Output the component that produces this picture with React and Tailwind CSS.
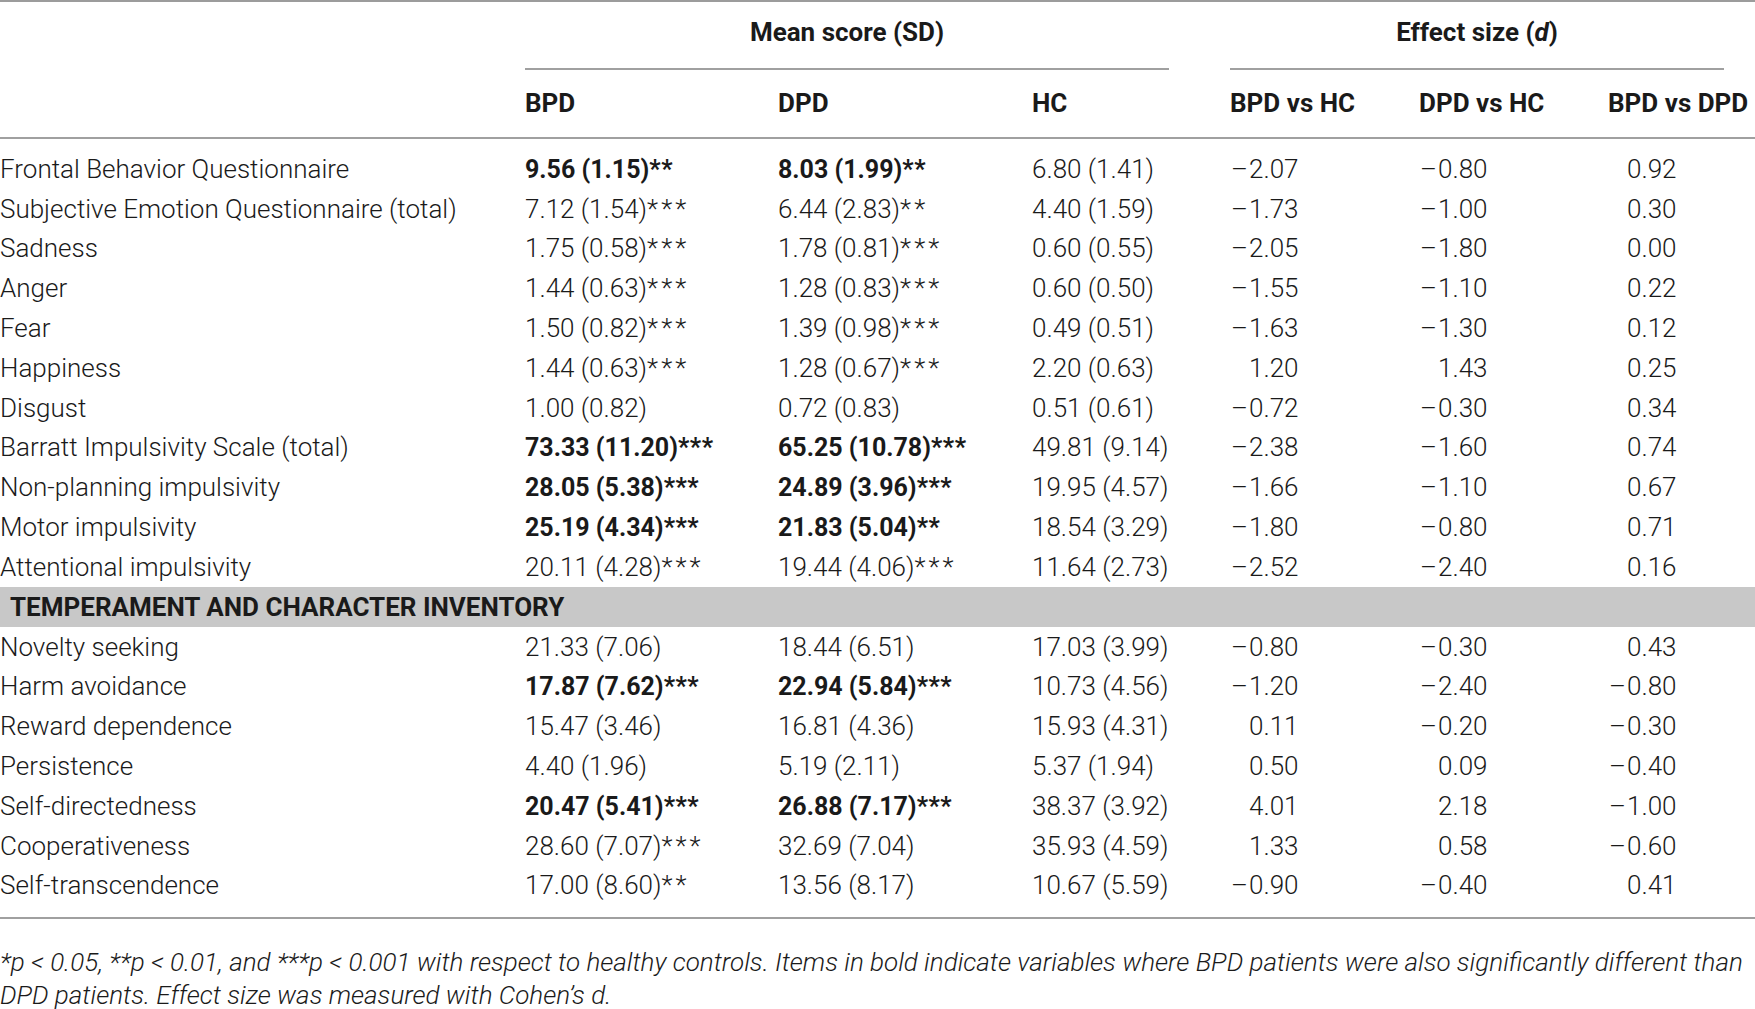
import React from "react";

const rows1 = [
  ["Frontal Behavior Questionnaire", ["9.56 (1.15)", "**", true], ["8.03 (1.99)", "**", true], "6.80 (1.41)", ["-2.07", "-0.80", "0.92"]],
  ["Subjective Emotion Questionnaire (total)", ["7.12 (1.54)", "***", false], ["6.44 (2.83)", "**", false], "4.40 (1.59)", ["-1.73", "-1.00", "0.30"]],
  ["Sadness", ["1.75 (0.58)", "***", false], ["1.78 (0.81)", "***", false], "0.60 (0.55)", ["-2.05", "-1.80", "0.00"]],
  ["Anger", ["1.44 (0.63)", "***", false], ["1.28 (0.83)", "***", false], "0.60 (0.50)", ["-1.55", "-1.10", "0.22"]],
  ["Fear", ["1.50 (0.82)", "***", false], ["1.39 (0.98)", "***", false], "0.49 (0.51)", ["-1.63", "-1.30", "0.12"]],
  ["Happiness", ["1.44 (0.63)", "***", false], ["1.28 (0.67)", "***", false], "2.20 (0.63)", ["1.20", "1.43", "0.25"]],
  ["Disgust", ["1.00 (0.82)", "", false], ["0.72 (0.83)", "", false], "0.51 (0.61)", ["-0.72", "-0.30", "0.34"]],
  ["Barratt Impulsivity Scale (total)", ["73.33 (11.20)", "***", true], ["65.25 (10.78)", "***", true], "49.81 (9.14)", ["-2.38", "-1.60", "0.74"]],
  ["Non-planning impulsivity", ["28.05 (5.38)", "***", true], ["24.89 (3.96)", "***", true], "19.95 (4.57)", ["-1.66", "-1.10", "0.67"]],
  ["Motor impulsivity", ["25.19 (4.34)", "***", true], ["21.83 (5.04)", "**", true], "18.54 (3.29)", ["-1.80", "-0.80", "0.71"]],
  ["Attentional impulsivity", ["20.11 (4.28)", "***", false], ["19.44 (4.06)", "***", false], "11.64 (2.73)", ["-2.52", "-2.40", "0.16"]],
];

const rows2 = [
  ["Novelty seeking", ["21.33 (7.06)", "", false], ["18.44 (6.51)", "", false], "17.03 (3.99)", ["-0.80", "-0.30", "0.43"]],
  ["Harm avoidance", ["17.87 (7.62)", "***", true], ["22.94 (5.84)", "***", true], "10.73 (4.56)", ["-1.20", "-2.40", "-0.80"]],
  ["Reward dependence", ["15.47 (3.46)", "", false], ["16.81 (4.36)", "", false], "15.93 (4.31)", ["0.11", "-0.20", "-0.30"]],
  ["Persistence", ["4.40 (1.96)", "", false], ["5.19 (2.11)", "", false], "5.37 (1.94)", ["0.50", "0.09", "-0.40"]],
  ["Self-directedness", ["20.47 (5.41)", "***", true], ["26.88 (7.17)", "***", true], "38.37 (3.92)", ["4.01", "2.18", "-1.00"]],
  ["Cooperativeness", ["28.60 (7.07)", "***", false], ["32.69 (7.04)", "", false], "35.93 (4.59)", ["1.33", "0.58", "-0.60"]],
  ["Self-transcendence", ["17.00 (8.60)", "**", false], ["13.56 (8.17)", "", false], "10.67 (5.59)", ["-0.90", "-0.40", "0.41"]],
];

const GRID = "grid grid-cols-[525px_253px_254px_198px_189px_189px_1fr]";

function Score({ v }) {
  const [num, stars, bold] = v;
  return (
    <span className={bold ? "font-bold text-[25px]" : "font-light"}>
      {num}
      {stars && (
        <span className={bold ? "tracking-[0.5px]" : "tracking-[3px]"}>{stars}</span>
      )}
    </span>
  );
}

function Eff({ v }) {
  const neg = v.startsWith("-");
  const n = neg ? v.slice(1) : v;
  return (
    <span className="font-light whitespace-nowrap">
      <span className={"inline-block w-[20px] text-right pr-[1px] " + (neg ? "" : "invisible")}>–</span>
      {n}
    </span>
  );
}

function Row({ r }) {
  return (
    <div className={GRID + " h-[39.8px] items-center whitespace-nowrap"}>
      <div className="font-light">{r[0]}</div>
      <div><Score v={r[1]} /></div>
      <div><Score v={r[2]} /></div>
      <div className="font-light">{r[3]}</div>
      <div className="-ml-[1px]"><Eff v={r[4][0]} /></div>
      <div className="-ml-[1px]"><Eff v={r[4][1]} /></div>
      <div className="-ml-[1px]"><Eff v={r[4][2]} /></div>
    </div>
  );
}

export default function App() {
  return (
    <div
      className="w-[1755px] h-[1009px] overflow-hidden bg-white text-[#1a1a1a] text-[26px] leading-none"
      style={{ fontFamily: "Roboto, 'Liberation Sans', Arial, sans-serif" }}
    >
      <div className="border-t-2 border-[#9c9c9c]">
        <div className="flex h-[68px]">
          <div className="w-[525px]" />
          <div className="w-[644px] flex items-center justify-center border-b-2 border-[#a0a0a0] pb-[6px] font-bold">
            Mean score (SD)
          </div>
          <div className="w-[61px]" />
          <div className="w-[494px] flex items-center justify-center border-b-2 border-[#a0a0a0] pb-[6px] font-bold">
            <span>Effect size (<span className="italic">d</span>)</span>
          </div>
        </div>
        <div className={GRID + " h-[69px] items-center font-bold border-b-2 border-[#a0a0a0] pb-[2px] whitespace-nowrap"}>
          <div />
          <div>BPD</div>
          <div>DPD</div>
          <div>HC</div>
          <div>BPD vs HC</div>
          <div>DPD vs HC</div>
          <div>BPD vs DPD</div>
        </div>
        <div className="pt-[10px]">
          {rows1.map((r, i) => (
            <Row key={i} r={r} />
          ))}
          <div className="h-[40px] bg-[#c8c8c8] flex items-center pl-[10px] font-bold">
            TEMPERAMENT AND CHARACTER INVENTORY
          </div>
          {rows2.map((r, i) => (
            <Row key={i} r={r} />
          ))}
        </div>
        <div className="h-[14px] border-b-2 border-[#a0a0a0]" />
        <div className="mt-[27px] italic font-light text-[26px] leading-[32.5px] whitespace-nowrap">
          <div>
            *p &lt; 0.05, **p &lt; 0.01, and ***p &lt; 0.001 with respect to healthy controls. Items in bold indicate variables where BPD patients were also significantly different than
          </div>
          <div>DPD patients. Effect size was measured with Cohen’s d.</div>
        </div>
      </div>
    </div>
  );
}
